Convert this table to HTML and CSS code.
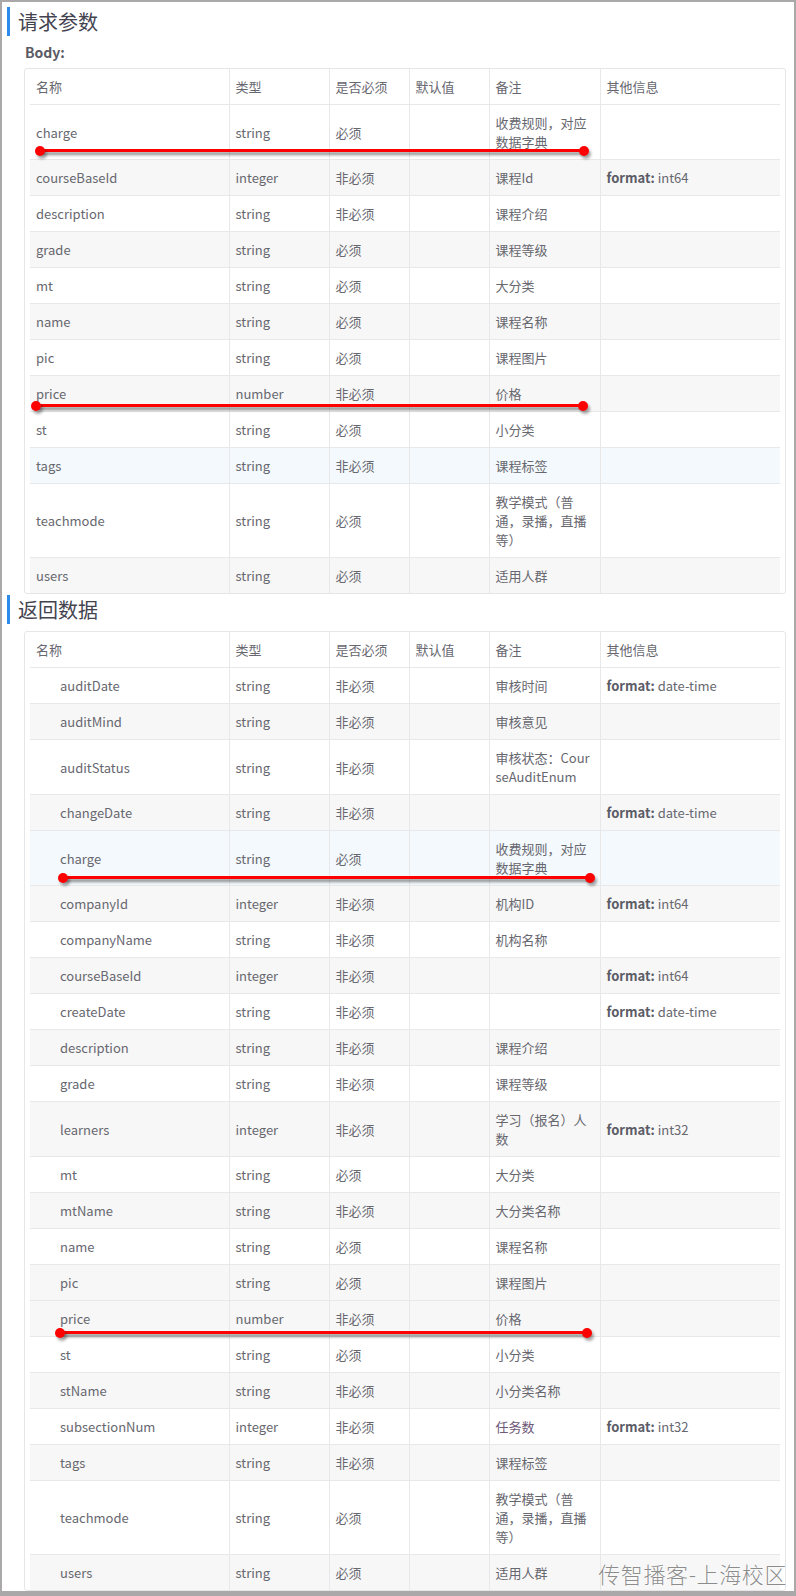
FILE: index.html
```html
<!DOCTYPE html>
<html lang="zh-CN">
<head>
<meta charset="utf-8">
<title>接口文档</title>
<link rel="stylesheet" href="styles.css">
</head>
<body>
<div class="frame">
  <section class="section">
    <h2 class="sec-title">请求参数</h2>
    <div class="body-label">Body:</div>
    <div class="tbl-box">
      <table class="tbl">
        <colgroup><col class="c1"><col class="c2"><col class="c3"><col class="c4"><col class="c5"><col class="c6"></colgroup>
        <thead><tr><th>名称</th><th>类型</th><th>是否必须</th><th>默认值</th><th>备注</th><th>其他信息</th></tr></thead>
        <tbody>
          <tr><td>charge</td><td>string</td><td>必须</td><td></td><td>收费规则，对应数据字典</td><td></td></tr>
          <tr class="g"><td>courseBaseId</td><td>integer</td><td>非必须</td><td></td><td>课程Id</td><td><b>format:</b> int64</td></tr>
          <tr><td>description</td><td>string</td><td>非必须</td><td></td><td>课程介绍</td><td></td></tr>
          <tr class="g"><td>grade</td><td>string</td><td>必须</td><td></td><td>课程等级</td><td></td></tr>
          <tr><td>mt</td><td>string</td><td>必须</td><td></td><td>大分类</td><td></td></tr>
          <tr class="g"><td>name</td><td>string</td><td>必须</td><td></td><td>课程名称</td><td></td></tr>
          <tr><td>pic</td><td>string</td><td>必须</td><td></td><td>课程图片</td><td></td></tr>
          <tr class="g"><td>price</td><td>number</td><td>非必须</td><td></td><td>价格</td><td></td></tr>
          <tr><td>st</td><td>string</td><td>必须</td><td></td><td>小分类</td><td></td></tr>
          <tr class="hl"><td>tags</td><td>string</td><td>非必须</td><td></td><td>课程标签</td><td></td></tr>
          <tr><td>teachmode</td><td>string</td><td>必须</td><td></td><td>教学模式（普通，录播，直播等）</td><td></td></tr>
          <tr class="g"><td>users</td><td>string</td><td>必须</td><td></td><td>适用人群</td><td></td></tr>
        </tbody>
      </table>
    </div>
  </section>
  <section class="section">
    <h2 class="sec-title sec-title-2">返回数据</h2>
    <div class="tbl-box">
      <table class="tbl tbl-nested">
        <colgroup><col class="c1"><col class="c2"><col class="c3"><col class="c4"><col class="c5"><col class="c6"></colgroup>
        <thead><tr><th>名称</th><th>类型</th><th>是否必须</th><th>默认值</th><th>备注</th><th>其他信息</th></tr></thead>
        <tbody>
          <tr><td>auditDate</td><td>string</td><td>非必须</td><td></td><td>审核时间</td><td><b>format:</b> date-time</td></tr>
          <tr class="g"><td>auditMind</td><td>string</td><td>非必须</td><td></td><td>审核意见</td><td></td></tr>
          <tr><td>auditStatus</td><td>string</td><td>非必须</td><td></td><td class="brk">审核状态：CourseAuditEnum</td><td></td></tr>
          <tr class="g"><td>changeDate</td><td>string</td><td>非必须</td><td></td><td></td><td><b>format:</b> date-time</td></tr>
          <tr class="hl"><td>charge</td><td>string</td><td>必须</td><td></td><td>收费规则，对应数据字典</td><td></td></tr>
          <tr class="g"><td>companyId</td><td>integer</td><td>非必须</td><td></td><td>机构ID</td><td><b>format:</b> int64</td></tr>
          <tr><td>companyName</td><td>string</td><td>非必须</td><td></td><td>机构名称</td><td></td></tr>
          <tr class="g"><td>courseBaseId</td><td>integer</td><td>非必须</td><td></td><td></td><td><b>format:</b> int64</td></tr>
          <tr><td>createDate</td><td>string</td><td>非必须</td><td></td><td></td><td><b>format:</b> date-time</td></tr>
          <tr class="g"><td>description</td><td>string</td><td>非必须</td><td></td><td>课程介绍</td><td></td></tr>
          <tr><td>grade</td><td>string</td><td>非必须</td><td></td><td>课程等级</td><td></td></tr>
          <tr class="g"><td>learners</td><td>integer</td><td>非必须</td><td></td><td>学习（报名）人数</td><td><b>format:</b> int32</td></tr>
          <tr><td>mt</td><td>string</td><td>必须</td><td></td><td>大分类</td><td></td></tr>
          <tr class="g"><td>mtName</td><td>string</td><td>非必须</td><td></td><td>大分类名称</td><td></td></tr>
          <tr><td>name</td><td>string</td><td>必须</td><td></td><td>课程名称</td><td></td></tr>
          <tr class="g"><td>pic</td><td>string</td><td>必须</td><td></td><td>课程图片</td><td></td></tr>
          <tr class="g"><td>price</td><td>number</td><td>非必须</td><td></td><td>价格</td><td></td></tr>
          <tr><td>st</td><td>string</td><td>必须</td><td></td><td>小分类</td><td></td></tr>
          <tr class="g"><td>stName</td><td>string</td><td>非必须</td><td></td><td>小分类名称</td><td></td></tr>
          <tr><td>subsectionNum</td><td>integer</td><td>非必须</td><td></td><td class="purple">任务数</td><td><b>format:</b> int32</td></tr>
          <tr class="g"><td>tags</td><td>string</td><td>非必须</td><td></td><td>课程标签</td><td></td></tr>
          <tr><td>teachmode</td><td>string</td><td>必须</td><td></td><td>教学模式（普通，录播，直播等）</td><td></td></tr>
          <tr class="g"><td>users</td><td>string</td><td>必须</td><td></td><td>适用人群</td><td></td></tr>
        </tbody>
      </table>
    </div>
  </section>
  <div class="watermark">传智播客-上海校区</div>
</div>
<div class="redline rl1"></div>
<div class="redline rl2"></div>
<div class="redline rl3"></div>
<div class="redline rl4"></div>
</body>
</html>
```
FILE: styles.css
```css
html, body {
  margin: 0;
  padding: 0;
  background: #fff;
}
body {
  position: relative;
  width: 796px;
  height: 1596px;
  overflow: hidden;
  font-family: "Noto Sans CJK SC", "Noto Sans", sans-serif;
  color: #67676f;
}
.frame {
  position: relative;
  box-sizing: border-box;
  width: 796px;
  height: 1596px;
  border-style: solid;
  border-color: #aba8aa;
  border-width: 2px 2px 5px 2px;
  overflow: hidden;
  background: #fff;
}
.section {
  display: flex;
  flex-direction: column;
}
.sec-title {
  margin: 5px 0 0 5px;
  height: 29px;
  line-height: 29px;
  padding-left: 8px;
  border-left: 3px solid #2d8ceb;
  font-size: 20px;
  font-weight: normal;
  color: #444450;
}
.sec-title-2 {
  margin-top: 1px;
  margin-bottom: 7px;
}
.body-label {
  margin: 6px 0 6px 23px;
  height: 20px;
  line-height: 20px;
  font-size: 14px;
  font-weight: bold;
  color: #5a5a64;
}
.tbl-box {
  margin: 0 8px 0 22px;
  padding: 0 5px;
  border: 1px solid #e6e6e6;
  border-radius: 3px;
}
.tbl {
  width: 100%;
  table-layout: fixed;
  border-collapse: collapse;
  font-size: 13px;
}
.c1 { width: 199px; }
.c2 { width: 100px; }
.c3 { width: 80px; }
.c4 { width: 80px; }
.c5 { width: 111px; }
.c6 { width: auto; }
.tbl th, .tbl td {
  padding: 8px 6px;
  line-height: 19px;
  text-align: left;
  vertical-align: middle;
  font-weight: normal;
  border-bottom: 1px solid #e8e8e8;
  border-left: 1px solid #e8e8e8;
  color: #67676f;
}
.tbl th:first-child, .tbl td:first-child {
  border-left: none;
}
.tbl tbody tr:last-child td {
  border-bottom: none;
}
.tbl b {
  font-weight: bold;
  color: #5c5c66;
}
.tbl-nested tbody td:first-child {
  padding-left: 30px;
}
.tbl .brk {
  word-break: break-all;
}
.tbl .purple {
  color: #6e5878;
}
tr.g td {
  background: #f7f7f7;
}
tr.hl td {
  background: #f3f9fc;
}
.watermark {
  position: absolute;
  right: 7px;
  bottom: 2px;
  font-size: 22px;
  font-weight: 300;
  letter-spacing: 0.6px;
  color: rgba(120, 120, 120, 0.85);
  text-shadow: 0 0 2px #fff, 0 0 1px #fff;
}
.redline {
  position: absolute;
  height: 3px;
  background: #ff0000;
  border-radius: 2px;
  box-shadow: 2px 3px 3px rgba(0, 0, 0, 0.45);
}
.redline::before, .redline::after {
  content: "";
  position: absolute;
  top: -3.5px;
  width: 10px;
  height: 10px;
  border-radius: 50%;
  background: #ff0000;
  box-shadow: 2px 3px 3px rgba(0, 0, 0, 0.35);
}
.redline::before { left: -5px; }
.redline::after { right: -5px; }
.rl1 { left: 40px; top: 149px; width: 544px; }
.rl2 { left: 36px; top: 404px; width: 547px; }
.rl3 { left: 63px; top: 876px; width: 527px; }
.rl4 { left: 60px; top: 1331px; width: 527px; }
```
